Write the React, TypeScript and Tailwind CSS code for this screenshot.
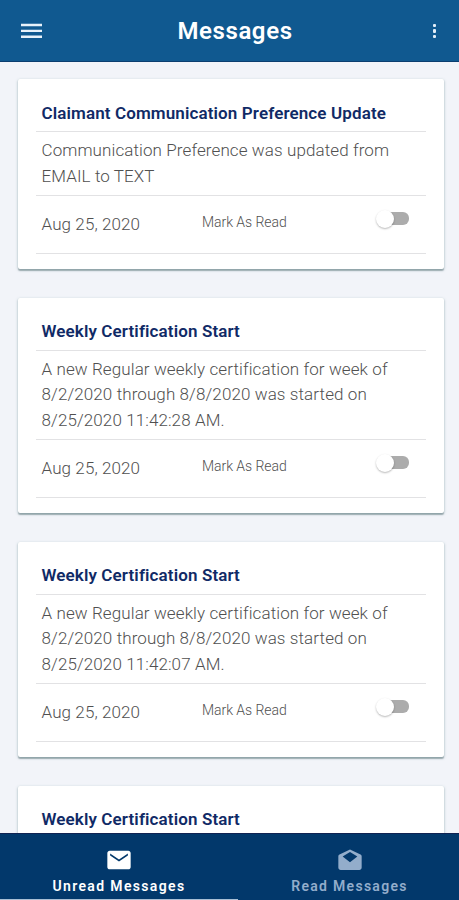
type Message = { title: string; lines: string[]; date: string };

const messages: Message[] = [
  {
    title: "Claimant Communication Preference Update",
    lines: ["Communication Preference was updated from", "EMAIL to TEXT"],
    date: "Aug 25, 2020",
  },
  {
    title: "Weekly Certification Start",
    lines: ["A new Regular weekly certification for week of", "8/2/2020 through 8/8/2020 was started on", "8/25/2020 11:42:28 AM."],
    date: "Aug 25, 2020",
  },
  {
    title: "Weekly Certification Start",
    lines: ["A new Regular weekly certification for week of", "8/2/2020 through 8/8/2020 was started on", "8/25/2020 11:42:07 AM."],
    date: "Aug 25, 2020",
  },
];

function Toggle() {
  return (
    <button aria-label="Mark as read" className="flex h-5 w-[34px] items-center">
      <span className="z-10 -mr-3 size-[18px] shrink-0 rounded-full bg-white shadow-[0_1px_2px_rgba(0,0,0,0.28)]" />
      <span className="h-[13px] w-[27px] shrink-0 rounded-[6px] bg-[#acacac]" />
    </button>
  );
}

function CardTitle({ children }: { children: string }) {
  return (
    <h2 className="flex h-[53px] items-end border-b border-[#e2e2e4] pb-[8.5px] pl-[6px] text-[17px] leading-5 font-semibold tracking-[0.12px] whitespace-nowrap text-[#102a66]">
      {children}
    </h2>
  );
}

const cardClass =
  "shrink-0 rounded-[2px] bg-white px-[18px] shadow-[0_1px_3px_rgba(30,90,90,0.35),0_1.5px_1px_rgba(40,60,70,0.3)]";

function MessageCard({ message }: { message: Message }) {
  return (
    <article className={`${cardClass} pb-[15.5px]`}>
      <CardTitle>{message.title}</CardTitle>
      <div className="border-b border-[#e2e2e4] pt-[6px] pb-[5.5px] pl-[6px] text-[17px] leading-[25.5px] font-light tracking-[0.1px] whitespace-nowrap text-[#505050]">
        {message.lines.map((line) => (
          <p key={line}>{line}</p>
        ))}
      </div>
      <div className="flex h-[58px] border-b border-[#e2e2e4] pl-[6px] text-[#505050]">
        <span className="w-[160.5px] pt-[18px] text-[17px] leading-5 font-light tracking-[0.1px]">{message.date}</span>
        <span className="flex-1 pt-[16px] text-[14px] leading-5 font-light tracking-[-0.05px]">Mark As Read</span>
        <span className="pt-[13px] pr-[16px]">
          <Toggle />
        </span>
      </div>
    </article>
  );
}

export default function App() {
  return (
    <div className="flex h-[900px] w-[459px] flex-col overflow-hidden bg-[#f2f4f9] font-['Roboto','Liberation_Sans',sans-serif]">
      <header className="z-10 flex h-[62px] shrink-0 items-center justify-between border-b border-[#0b3e70] bg-[#105990] pr-[22px] pl-[21px] text-white">
        <button aria-label="Menu" className="pt-px">
          <svg className="h-4 w-[21px]" viewBox="0 0 21 16" fill="#e8f2fa">
            <path d="M0 .8h21v2.400H0zM0 6.700h21v2.400H0zM0 12.600h21V15H0z" />
          </svg>
        </button>
        <h1 className="pr-[4px] text-[24px] leading-8 font-semibold tracking-[0.6px]">Messages</h1>
        <button aria-label="More" className="flex w-[5px] flex-col items-center gap-[2px] pt-px">
          <span className="size-[3.5px] rounded-[1px] bg-[#e2eef8]" />
          <span className="size-[3.5px] rounded-[1px] bg-[#e2eef8]" />
          <span className="size-[3.5px] rounded-[1px] bg-[#e2eef8]" />
        </button>
      </header>

      <main className="flex min-h-0 flex-1 flex-col gap-[28.5px] overflow-hidden pt-[17px] pr-[15.5px] pl-[17.5px]">
        {messages.map((message, i) => (
          <MessageCard key={i} message={message} />
        ))}
        <article className={cardClass}>
          <CardTitle>Weekly Certification Start</CardTitle>
        </article>
      </main>

      <nav className="z-10 flex h-[67px] shrink-0 border-t border-[#102352] bg-[#02386b] text-[14px] leading-4 font-semibold">
        <div className="flex w-[238px] flex-col items-center border-b border-[#a9bfd5] pt-[12px] text-white">
          <svg className="size-7" viewBox="0 0 24 24" fill="currentColor">
            <path d="M20 4H4c-1.1 0-1.99.9-1.99 2L2 18c0 1.1.9 2 2 2h16c1.1 0 2-.9 2-2V6c0-1.1-.9-2-2-2zM19.600 8.200 12 13.200 4.400 8.200V6.500l7.600 5 7.600-5z" />
          </svg>
          <span className="mt-1 tracking-[1.35px]">Unread Messages</span>
        </div>
        <div className="flex flex-1 flex-col items-center pt-[12px] pl-[2px] text-[#93adcb]">
          <svg className="size-7" viewBox="0 0 24 24" fill="currentColor">
            <path
              fillRule="evenodd"
              d="M12 3 3 7.2c-.6.3-1 .9-1 1.6V18.500c0 1.100.9 2 2 2h16c1.100 0 2-.9 2-2V8.800c0-.7-.4-1.300-1-1.600L12 3zM12 5.100 18.300 9 12 14 5.700 9 12 5.100z"
            />
          </svg>
          <span className="mt-1 tracking-[1.3px]">Read Messages</span>
        </div>
      </nav>
    </div>
  );
}
